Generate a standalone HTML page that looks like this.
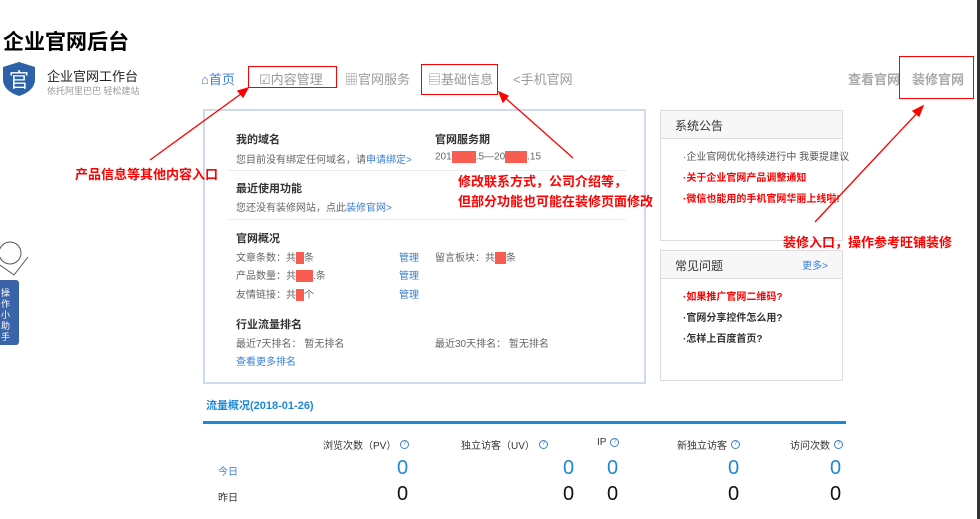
<!DOCTYPE html>
<html><head><meta charset="utf-8"><style>
*{margin:0;padding:0;box-sizing:border-box}
body{width:980px;height:519px;background:#fff;position:relative;overflow:hidden;font-family:"Liberation Sans","Noto Sans CJK SC",sans-serif;color:#333}
.a{position:absolute;white-space:nowrap}
.nav{font-size:13px;color:#999;top:69px}
.box{position:absolute;border:1px solid red}
.red{color:#f00;font-weight:bold;font-size:13px}
.h{font-size:11px;font-weight:bold;color:#333}
.t{font-size:10px;color:#666}
.bl{color:#3a7fd5}
.m{background:#f95c50;display:inline-block;height:12px;vertical-align:middle}
.pn{position:absolute;border:1px solid #ddd;width:183px}
.pn .hd{height:28px;background:#f7f7f7;border-bottom:1px solid #ddd;font-size:12px;padding:6px 14px;color:#333}
.pn li{list-style:none;font-size:10px;margin:0 0 8px 22px;white-space:nowrap;height:13px}
.big{font-size:20px;color:#1e88d8}
.big2{font-size:20px;color:#111}
.hdr{top:437px;color:#333;display:flex;align-items:center}
.q{display:inline-block;width:9px;height:9px;border:1px solid #3a7fd5;border-radius:50%;font-size:6px;color:#3a7fd5;text-align:center;line-height:7px;margin-left:4px}
</style></head><body>
<div class="a" style="left:3px;top:26px;font-size:21px;font-weight:bold;color:#000">企业官网后台</div>
<svg class="a" style="left:2px;top:61px" width="34" height="36" viewBox="0 0 34 36"><path d="M17 1 L33 6 V18 C33 27 26 32 17 35 C8 32 1 27 1 18 V6 Z" fill="#2e62a8"/><text x="17" y="26" font-size="20" fill="#fff" text-anchor="middle" font-family="Noto Sans CJK SC">官</text></svg>
<div class="a" style="left:47px;top:66px;font-size:13px;color:#222">企业官网工作台</div>
<div class="a" style="left:47px;top:84px;font-size:9px;color:#999">依托阿里巴巴 轻松建站</div>
<div class="a nav" style="left:201px;color:#3a7fd5">⌂首页</div>
<div class="a nav" style="left:259px">☑内容管理</div>
<div class="a nav" style="left:345px">▦官网服务</div>
<div class="a nav" style="left:428px">▤基础信息</div>
<div class="a nav" style="left:513px">&lt;手机官网</div>
<div class="a nav" style="left:848px;font-weight:bold;color:#aaa">查看官网</div>
<div class="a nav" style="left:912px;font-weight:bold;color:#aaa">装修官网</div>
<div class="box" style="left:248px;top:66px;width:89px;height:22px"></div>
<div class="box" style="left:421px;top:64px;width:77px;height:31px"></div>
<div class="box" style="left:899px;top:56px;width:75px;height:43px"></div>
<div class="a" style="left:977px;top:0;width:3px;height:519px;background:#333"></div>
<div class="a" style="left:203px;top:109px;width:443px;height:275px;border:2px solid #cfdaee"></div>
<div class="a" style="left:228px;top:170px;width:398px;height:1px;background:#e8edf5"></div>
<div class="a" style="left:228px;top:219px;width:398px;height:1px;background:#e8edf5"></div>
<div class="a h" style="left:236px;top:131px">我的域名</div>
<div class="a t" style="left:236px;top:151px">您目前没有绑定任何域名，请<span class="bl">申请绑定&gt;</span></div>
<div class="a h" style="left:435px;top:131px">官网服务期</div>
<div class="a t" style="left:435px;top:151px">201<span class="m" style="width:24px"></span>.5—20<span class="m" style="width:22px"></span>.15</div>
<div class="a h" style="left:236px;top:180px">最近使用功能</div>
<div class="a t" style="left:236px;top:199px">您还没有装修网站，点此<span class="bl">装修官网&gt;</span></div>
<div class="a h" style="left:236px;top:230px">官网概况</div>
<div class="a t" style="left:236px;top:249px">文章条数：共<span class="m" style="width:8px"></span>条</div>
<div class="a t" style="left:236px;top:267px">产品数量：共<span class="m" style="width:17px"></span>.条</div>
<div class="a t" style="left:236px;top:286px">友情链接：共<span class="m" style="width:8px"></span>个</div>
<div class="a t bl" style="left:399px;top:249px">管理</div>
<div class="a t bl" style="left:399px;top:267px">管理</div>
<div class="a t bl" style="left:399px;top:286px">管理</div>
<div class="a t" style="left:435px;top:249px">留言板块：共<span class="m" style="width:11px"></span>条</div>
<div class="a h" style="left:236px;top:316px">行业流量排名</div>
<div class="a t" style="left:236px;top:335px">最近7天排名： 暂无排名</div>
<div class="a t" style="left:435px;top:335px">最近30天排名： 暂无排名</div>
<div class="a t bl" style="left:236px;top:353px">查看更多排名</div>
<div class="pn" style="left:660px;top:110px;height:131px"><div class="hd">系统公告</div><ul style="margin-top:9px"><li style="color:#555">·企业官网优化持续进行中 我要提建议</li><li style="color:#f00;font-weight:bold">·关于企业官网产品调整通知</li><li style="color:#f00;font-weight:bold">·微信也能用的手机官网华丽上线啦!</li></ul></div>
<div class="pn" style="left:660px;top:250px;height:131px"><div class="hd">常见问题<span style="float:right;color:#3a7fd5;font-size:10px">更多&gt;</span></div><ul style="margin-top:9px"><li style="color:#f00;font-weight:bold">·如果推广官网二维码?</li><li style="font-weight:bold">·官网分享控件怎么用?</li><li style="font-weight:bold">·怎样上百度首页?</li></ul></div>
<div class="a" style="left:206px;top:397px;font-size:11px;font-weight:bold;color:#1e88d8">流量概况(2018-01-26)</div>
<div class="a" style="left:203px;top:421px;width:643px;height:3px;background:#1e88d8"></div>
<div class="a t hdr" style="left:323px">浏览次数（PV）<span class="q">?</span></div>
<div class="a t hdr" style="left:461px">独立访客（UV）<span class="q">?</span></div>
<div class="a t hdr" style="left:597px">IP<span class="q">?</span></div>
<div class="a t hdr" style="left:677px">新独立访客<span class="q">?</span></div>
<div class="a t hdr" style="left:790px">访问次数<span class="q">?</span></div>
<div class="a t bl" style="left:218px;top:463px">今日</div>
<div class="a t" style="left:218px;top:489px;color:#333">昨日</div>
<div class="a big" style="left:397px;top:457px">0</div><div class="a big" style="left:563px;top:457px">0</div><div class="a big" style="left:607px;top:457px">0</div><div class="a big" style="left:728px;top:457px">0</div><div class="a big" style="left:830px;top:457px">0</div>
<div class="a big2" style="left:397px;top:483px">0</div><div class="a big2" style="left:563px;top:483px">0</div><div class="a big2" style="left:607px;top:483px">0</div><div class="a big2" style="left:728px;top:483px">0</div><div class="a big2" style="left:830px;top:483px">0</div>
<div class="a" style="left:0;top:280px;width:19px;height:65px;background:#3b64a8;border-radius:0 3px 3px 0"></div>
<div class="a" style="left:1px;top:288px;font-size:9px;color:#fff;line-height:11px;white-space:normal;width:10px">操作小助手</div>
<svg class="a" style="left:0;top:235px" width="32" height="50"><circle cx="10" cy="18" r="11" fill="#fff" stroke="#555"/><path d="M0 30 L14 40 L28 22" fill="none" stroke="#555"/></svg>
<div class="a red" style="left:75px;top:164px">产品信息等其他内容入口</div>
<div class="a red" style="left:458px;top:172px;line-height:20px">修改联系方式，公司介绍等，<br>但部分功能也可能在装修页面修改</div>
<div class="a red" style="left:783px;top:232px">装修入口，操作参考旺铺装修</div>
<svg class="a" style="left:0;top:0" width="980" height="519"><g stroke="#f00" stroke-width="1.3" fill="#f00"><line x1="150" y1="160" x2="245" y2="91"/><path d="M248 88 L238 91 L243 97Z"/><line x1="573" y1="158" x2="502" y2="95"/><path d="M499 92 L503 102 L508 96Z"/><line x1="815" y1="222" x2="920" y2="110"/><path d="M923 106 L913 111 L919 116Z"/></g></svg>
</body></html>
